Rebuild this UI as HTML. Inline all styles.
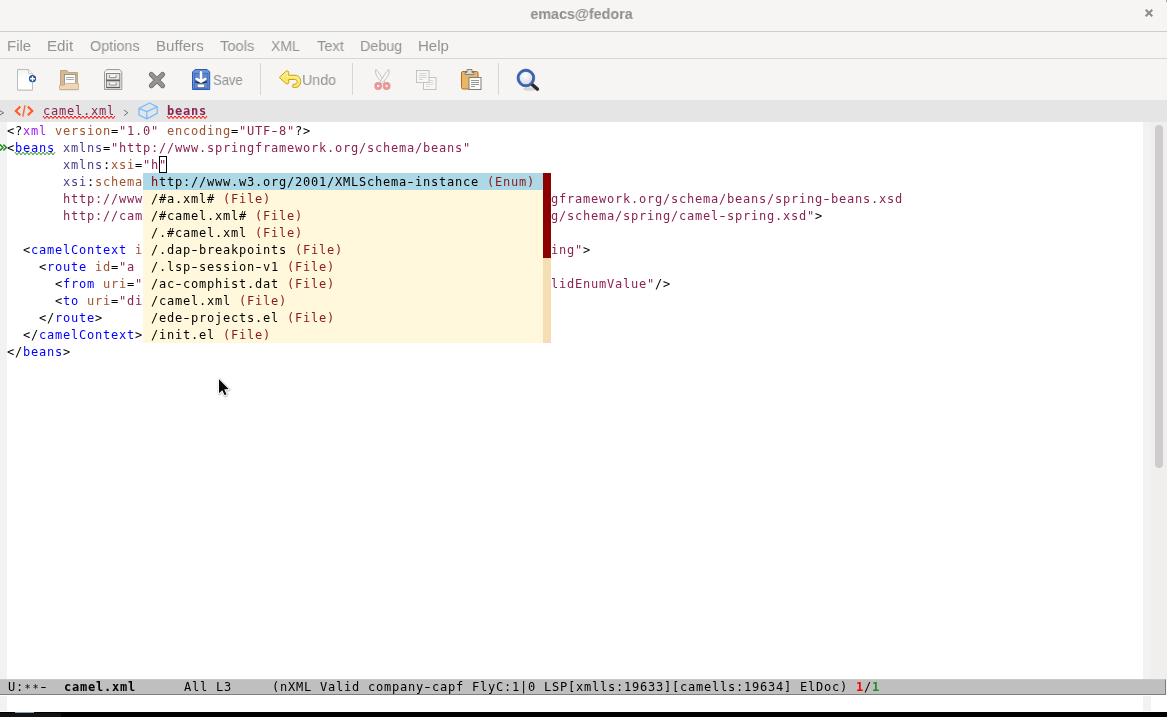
<!DOCTYPE html>
<html lang="en">
<head>
<meta charset="utf-8">
<title>emacs@fedora</title>
<style>
html,body{margin:0;padding:0;}
body{width:1167px;height:717px;overflow:hidden;background:#f6f5f4;position:relative;font-family:"Liberation Sans","DejaVu Sans",sans-serif;}
.abs{position:absolute;}
.t{will-change:transform;}
.h{display:inline-block;transform:scaleX(1.450);}
.as{display:inline-block;transform:translateY(2px) scale(0.850);}
#titlebar{left:0;top:0;width:1167px;height:31px;background:#f6f5f4;}
#title{left:-1.700px;width:1167px;top:5px;transform:scaleX(0.955);text-align:center;font-weight:bold;font-size:15px;color:#8e8e8c;line-height:18px;}
.hline{left:0;width:1167px;height:1px;background:#d9d6d2;}
#menubar{left:0;top:32px;width:1167px;height:26px;}
.mi{position:absolute;top:5px;font-size:15px;line-height:18px;color:#909394;white-space:pre;transform-origin:0 0;display:inline-block;}
#toolbar{left:0;top:59px;width:1167px;height:41px;}
.tbtext{position:absolute;transform-origin:0 0;display:inline-block;font-size:15px;line-height:18px;color:#909394;top:12px;}
.vsep{position:absolute;top:4px;width:1px;height:32px;background:#d9d6d2;}
#header{left:0;top:100px;width:1167px;height:22px;background:#e5e5e5;}
.mono{font-family:"DejaVu Sans Mono","Liberation Mono",monospace;font-size:12px;line-height:17px;white-space:pre;letter-spacing:0.7754px;}
#buffer{left:0;top:122px;width:1167px;height:557px;background:#fff;}
#lfringe{left:0;top:122px;width:7px;height:557px;background:#f2f2f2;}
#rfringe{left:1143px;top:122px;width:8px;height:557px;background:#f2f2f2;}
#sbar{left:1151px;top:122px;width:16px;height:557px;background:#f1efee;}
#sthumb{left:1155px;top:125px;width:8px;height:343px;border-radius:4px;background:#cdcdcd;}
#code{left:7.4px;top:123px;color:#000;will-change:transform;}
.k{color:#a020f0}.v{color:#a0522d}.s{color:#8b2252}.f{color:#0000ff}.b{color:#483d8b}
#popup{left:143px;top:173px;width:400px;height:170px;background:#fff8dc;color:#000;}
#psel{left:143px;top:173px;width:400px;height:17px;background:#add8e6;}
#ptext{left:143.400px;top:174px;color:#000;}
.an{color:#8b1a1a}.cm{color:#8b0000}
#ptrack{left:543px;top:173px;width:8px;height:170px;background:#f5deb3;}
#pthumb{left:543px;top:173px;width:8px;height:85px;background:#8b0000;}
#cursor{left:159px;top:156px;width:6px;height:15px;border:1px solid #000;}
#modeline{left:0;top:679px;width:1166px;height:16px;background:#bfbfbf;box-sizing:border-box;border-top:1px solid #c8c8c8;border-bottom:1px solid #7f7f7f;border-right:1px solid #7f7f7f;color:#000;}
#mltext{left:8px;top:679px;color:#000;}
#echo{left:0;top:695px;width:1167px;height:17px;background:#fff;}
#bottom{left:0;top:712px;width:1167px;height:5px;background:#000;}
</style>
</head>
<body>
<div id="titlebar" class="abs"></div>
<div id="title" class="abs t">emacs@fedora</div>
<svg class="abs" style="left:1143px;top:7px" width="12" height="12" viewBox="1143 7 12 12"><path d="M1145.700 9.700 L1152.300 16.300 M1152.300 9.700 L1145.700 16.300" stroke="#8b8b89" stroke-width="2" fill="none"/></svg>
<div class="abs" style="left:1166px;top:0;width:1px;height:2px;background:#a4a4a3"></div>
<div class="abs hline" style="top:31px;background:#d0ccc8"></div>
<div id="menubar" class="abs">
<span class="mi t" style="left:7px;transform:scaleX(0.98)">File</span>
<span class="mi t" style="left:46.7px;transform:scaleX(1.01)">Edit</span>
<span class="mi t" style="left:89.5px;transform:scaleX(0.96)">Options</span>
<span class="mi t" style="left:155.7px;transform:scaleX(1.01)">Buffers</span>
<span class="mi t" style="left:220.3px;transform:scaleX(0.98)">Tools</span>
<span class="mi t" style="left:271px;transform:scaleX(0.935)">XML</span>
<span class="mi t" style="left:316.5px;transform:scaleX(0.98)">Text</span>
<span class="mi t" style="left:359.6px;transform:scaleX(0.956)">Debug</span>
<span class="mi t" style="left:417.9px;transform:scaleX(1.0)">Help</span>
</div>
<div class="abs hline" style="top:58px"></div>
<div id="toolbar" class="abs">
<span class="tbtext t" style="left:213.3px;transform:scaleX(0.87)">Save</span>
<span class="tbtext t" style="left:301.7px;transform:scaleX(0.95)">Undo</span>
<div class="vsep" style="left:260px"></div>
<div class="vsep" style="left:352px"></div>
<div class="vsep" style="left:498px"></div>
</div>
<svg class="abs" style="left:0;top:59px" width="1167" height="41" viewBox="0 59 1167 41">
<defs>
<linearGradient id="gpaper" x1="0" y1="0" x2="0" y2="1"><stop offset="0" stop-color="#f1f1f1"/><stop offset="0.450" stop-color="#ffffff"/><stop offset="1" stop-color="#ffffff"/></linearGradient>
<linearGradient id="gcab" x1="0" y1="0" x2="0" y2="1"><stop offset="0" stop-color="#e8e8e8"/><stop offset="1" stop-color="#b8b8b8"/></linearGradient>
<radialGradient id="gglass" cx="0.45" cy="0.35" r="0.7"><stop offset="0" stop-color="#ffffff"/><stop offset="1" stop-color="#d0d2d4"/></radialGradient>
</defs>
<!-- new file -->
<g>
<path d="M17.500 90.300 H32.500" stroke="#000" stroke-opacity="0.100" stroke-width="1.200"/>
<path d="M17.500 69.500 H28.500 L32.500 73.500 V90 H17.500 Z" fill="url(#gpaper)" stroke="#bcbcba" stroke-width="1"/>
<path d="M28.500 69.500 V73.500 H32.500" fill="#f4f4f4" stroke="#c4c4c2" stroke-width="0.800"/>
<circle cx="32.500" cy="78.650" r="3.550" fill="#1f4fa3"/>
<path d="M30 78.650 H35 M32.500 76.150 V81.150" stroke="#fff" stroke-width="1.450"/>
</g>
<!-- open folder -->
<g>
<path d="M60.500 70.500 H67 L68.500 72.500 H77.500 V88 H60.500 Z" fill="#d3b892" stroke="#c3a47c" stroke-width="1"/>
<rect x="64.500" y="74.500" width="11.200" height="11" fill="#fcfcfc" stroke="#8a8a88" stroke-width="0.800"/>
<path d="M66.200 77.500 H74 M66.200 79.500 H74" stroke="#a2a2a0" stroke-width="0.900"/>
<path d="M59.500 85.300 H64.300 L66 83.500 H78.500 V89.500 H59.500 Z" fill="#ecd8b9" stroke="#d3b48d" stroke-width="1"/>
<path d="M59.500 90.300 H78.500" stroke="#000" stroke-opacity="0.080" stroke-width="1"/>
</g>
<!-- dired cabinet -->
<g>
<path d="M104.500 89.500 V72 L106.800 69.500 H119.500 L121.800 72 V89.500 Z" fill="#ededed" stroke="#9c9c9a" stroke-width="1"/>
<path d="M105.500 72.300 H120.800" stroke="#fbfbfb" stroke-width="1.200"/>
<rect x="106.500" y="73.500" width="13.300" height="6.500" fill="#e6e6e6" stroke="#7b7b79" stroke-width="0.900"/>
<rect x="106.500" y="80.900" width="13.300" height="6.500" fill="#dedede" stroke="#7b7b79" stroke-width="0.900"/>
<path d="M106.300 80.300 H120 M106.300 87.700 H120" stroke="#4e4e4c" stroke-width="0.900"/>
<path d="M109.500 75.300 V77.600 H116 V75.300" fill="#fafafa" stroke="#848482" stroke-width="0.900"/>
<path d="M109.500 82.700 V85 H116 V82.700" fill="#fafafa" stroke="#848482" stroke-width="0.900"/>
</g>
<!-- close X -->
<g>
<path d="M151.300 74.400 L162.600 85.700 M162.600 74.400 L151.300 85.700" stroke="#6a6a68" stroke-width="5" stroke-linecap="round"/>
<path d="M151.300 74.400 L162.600 85.700 M162.600 74.400 L151.300 85.700" stroke="#949492" stroke-width="3.400" stroke-linecap="round"/>
</g>
<!-- save -->
<g>
<path d="M192.500 89.500 V72 L195 69.500 H207.200 L209.700 72 V89.500 Z" fill="#6a95dc" stroke="#2d5cab" stroke-width="1"/>
<rect x="194.300" y="73.300" width="13.600" height="7.600" fill="#5a88d4" stroke="#3a69ba" stroke-width="0.800"/>
<rect x="194.300" y="82.300" width="13.600" height="6" fill="#5f8cd6" stroke="#3a69ba" stroke-width="0.800"/>
<path d="M195.200 81.600 Q201 84.300 206.900 81.600" stroke="#1e1e1e" stroke-width="1.300" fill="none" opacity="0.850"/>
<path d="M197.600 84.600 V87.300 H204.300 V84.600" fill="#ffffff" stroke="#2a2a2a" stroke-width="0.700"/>
<path d="M197.900 84.800 V86.900 H204 V84.800" fill="#ffffff" stroke="#ffffff" stroke-width="0.600"/>
<path d="M201 72.300 V80.500 M196.600 78.900 L201 81.700 L205.400 78.900" fill="none" stroke="#30425e" stroke-width="3.600" stroke-linecap="round" stroke-linejoin="round" opacity="0.450"/>
<path d="M201 72.300 V80.500 M196.600 78.900 L201 81.700 L205.400 78.900" fill="none" stroke="#ffffff" stroke-width="2.700" stroke-linecap="round" stroke-linejoin="round"/>
</g>
<!-- undo -->
<g>
<path d="M279.300 77.400 L285.800 71.400 Q288.700 69.800 288.700 72.600 V75.300 H295 C299.300 75.300 300.700 78.500 300.700 81.500 C300.700 85.400 298 87.600 294.600 87.600 L292.600 87.200 L293.100 84.300 C295.800 84.600 297.200 83.300 297.200 81.800 C297.200 80.400 296.200 79.500 294.800 79.500 H288.700 V82.200 Q288.700 85 285.800 83.400 Z" fill="#f9e76c" stroke="#c8a408" stroke-width="1" stroke-linejoin="round"/>
<path d="M281.500 77.400 L287 72.600 V76.900 H295 C298 76.900 299 79.300 299 81.300" fill="none" stroke="#fdf6b8" stroke-width="0.900" stroke-linejoin="round" opacity="0.900"/>
</g>
<!-- cut -->
<g opacity="0.75">
<path d="M376 69.5 C374.5 73 376.5 77 383.6 84 L384.8 82.5 C381.5 77 378.5 72 376 69.5 Z" fill="#fafafa" stroke="#9c9c9a" stroke-width="0.8"/>
<path d="M388.6 69.5 C390.1 73 388.1 77 381 84 L379.8 82.5 C383.1 77 386.1 72 388.600 69.5 Z" fill="#fafafa" stroke="#9c9c9a" stroke-width="0.8"/>
<circle cx="378.200" cy="86" r="2.550" fill="none" stroke="#e37878" stroke-width="2.700"/>
<circle cx="386.600" cy="86" r="2.550" fill="none" stroke="#e37878" stroke-width="2.700"/>
</g>
<!-- copy -->
<g opacity="0.650">
<rect x="423.500" y="77.500" width="12.500" height="12" fill="#f8f8f8" stroke="#a8a8a6" stroke-width="1"/>
<path d="M426 80.500 H433.500 M426 82.500 H433.500 M426 84.500 H433.500 M426 86.500 H430" stroke="#c2c2c0" stroke-width="0.8"/>
<rect x="416.500" y="70.500" width="12.500" height="12" fill="#f8f8f8" stroke="#a8a8a6" stroke-width="1"/>
<path d="M419 73.500 H426.500 M419 75.500 H426.500 M419 77.500 H426.500 M419 79.500 H423" stroke="#b4b4b2" stroke-width="0.8"/>
</g>
<!-- paste -->
<g>
<rect x="461.500" y="71.500" width="16.500" height="17.500" rx="1.500" fill="#e9b566" stroke="#b9691f" stroke-width="1"/>
<path d="M465 74.500 V72.500 H467 V69.500 H472 V72.500 H474 V74.500 Z" fill="#d8d8d6" stroke="#7c7c7a" stroke-width="0.9"/>
<rect x="469" y="77.500" width="12" height="12" fill="#fbfbfb" stroke="#7e7e7c" stroke-width="1"/>
<path d="M471 80.500 H479 M471 82.500 H479 M471 84.500 H479 M471 86.500 H475" stroke="#8c8c8a" stroke-width="0.9"/>
</g>
<!-- search -->
<g>
<ellipse cx="530" cy="89" rx="7" ry="1.800" fill="#000" opacity="0.13"/>
<path d="M531.500 84 L537.300 89" stroke="#2a2a2a" stroke-width="3.600" stroke-linecap="round"/>
<circle cx="525.900" cy="78" r="7.600" fill="url(#gglass)" stroke="#3b63b8" stroke-width="2.600"/>
<circle cx="525.900" cy="78" r="8.900" fill="none" stroke="#2b4c98" stroke-width="0.600"/>
</g>
</svg>
<div id="header" class="abs"></div>
<svg class="abs" style="left:0;top:100px" width="260" height="22" viewBox="0 100 260 22">
<path d="M-1 110.2 L3.6 112.8 L-1 115.500" fill="none" stroke="#6e6e6e" stroke-width="1"/>
<path d="M20.300 106.600 L15.800 110.900 L20.300 115.300" fill="none" stroke="#ff5a2a" stroke-width="2.100"/>
<path d="M25 105.300 L22.800 116.700" fill="none" stroke="#ff6a3c" stroke-width="1.500"/>
<path d="M27.800 106.600 L32.300 110.900 L27.800 115.300" fill="none" stroke="#ff5a2a" stroke-width="2.100"/>
<path d="M124.200 110.200 L127.800 112.800 L124.200 115.500" fill="none" stroke="#6e6e6e" stroke-width="1"/>
<path d="M149.600 103 L157.200 106.900 V113.400 L146.800 118.800 L139 115 V108.400 Z M139 108.400 L146.800 111.600 L157.200 106.900 M146.800 111.600 V118.800" fill="none" stroke="#75beff" stroke-width="1.300" stroke-linejoin="round"/>
<polyline points="43,116 45,118.6 47,116 49,118.6 51,116 53,118.6 55,116 57,118.6 59,116 61,118.6 63,116 65,118.6 67,116 69,118.6 71,116 73,118.6 75,116 77,118.6 79,116 81,118.6 83,116 85,118.6 87,116 89,118.6 91,116 93,118.6 95,116 97,118.6 99,116 101,118.6 103,116 105,118.6 107,116 109,118.6 111,116 113,118.6 115,116" fill="none" stroke="#ff0000" stroke-width="1.0"/>
<polyline points="167,116 169,118.6 171,116 173,118.6 175,116 177,118.6 179,116 181,118.6 183,116 185,118.6 187,116 189,118.6 191,116 193,118.6 195,116 197,118.6 199,116 201,118.6 203,116 205,118.6 207,116" fill="none" stroke="#ff0000" stroke-width="1.0"/>
</svg>
<span class="abs mono t" style="left:43.400px;top:103px;color:#8b2252">camel.xml</span>
<span class="abs mono t" style="left:167.400px;top:103px;color:#8b2252;font-weight:bold">beans</span>
<div id="buffer" class="abs"></div>
<div id="lfringe" class="abs"></div>
<div id="rfringe" class="abs"></div>
<div id="sbar" class="abs"></div>
<div id="sthumb" class="abs"></div>
<svg class="abs" style="left:0;top:122px" width="600" height="60" viewBox="0 122 600 60">
<path d="M0 144.600 L3 147.500 L0 150.400 M3.400 144.600 L6.400 147.500 L3.400 150.400" fill="none" stroke="#228b22" stroke-width="1.500"/>
<polyline points="15,152.2 17,154.8 19,152.2 21,154.8 23,152.2 25,154.8 27,152.2 29,154.8 31,152.2 33,154.8 35,152.2 37,154.8 39,152.2 41,154.8 43,152.2 45,154.8 47,152.2 49,154.8 51,152.2 53,154.8 55,152.2" fill="none" stroke="#228b22" stroke-width="1.0"/>
</svg>
<div id="code" class="abs mono">&lt;?<span class="k">xml</span> <span class="v">version</span>=<span class="s">"1.0"</span> <span class="v">encoding</span>=<span class="s">"UTF<span class="h">-</span>8"</span>?&gt;
&lt;<span class="f">beans</span> <span class="b">xmlns</span>=<span class="s">"http://www.springframework.org/schema/beans"</span>
       <span class="b">xmlns</span>:<span class="v">xsi</span>=<span class="s">"h"</span>
       <span class="b">xsi</span>:<span class="v">schemaLocation</span>=<span class="s">"</span>
<span class="s">       http://www.springframework.org/schema/beans  http://www.springframework.org/schema/beans/spring<span class="h">-</span>beans.xsd</span>
<span class="s">       http://camel.apache.org/schema/spring  http://camel.apache.org/schema/spring/camel<span class="h">-</span>spring.xsd"</span>&gt;

  &lt;<span class="f">camelContext</span> <span class="v">id</span>=<span class="s">"camel"</span> <span class="b">xmlns</span>=<span class="s">"http://camel.apache.org/schema/spring"</span>&gt;
    &lt;<span class="f">route</span> <span class="v">id</span>=<span class="s">"a route"</span>&gt;
      &lt;<span class="f">from</span> <span class="v">uri</span>=<span class="s">"timer:timerName?delay=1000&amp;amp;exchangePattern=InvalidEnumValue"</span>/&gt;
      &lt;<span class="f">to</span> <span class="v">uri</span>=<span class="s">"direct:drink"</span>/&gt;
    &lt;/<span class="f">route</span>&gt;
  &lt;/<span class="f">camelContext</span>&gt;
&lt;/<span class="f">beans</span>&gt;</div>
<div id="popup" class="abs"></div>
<div id="psel" class="abs"></div>
<div id="ptext" class="abs mono t"> <span class="cm">h</span>ttp://www.w3.org/2001/XMLSchema<span class="h">-</span>instance <span class="an">(Enum)</span>
 /#a.xml# <span class="an">(File)</span>
 /#camel.xml# <span class="an">(File)</span>
 /.#camel.xml <span class="an">(File)</span>
 /.dap<span class="h">-</span>breakpoints <span class="an">(File)</span>
 /.lsp<span class="h">-</span>session<span class="h">-</span>v1 <span class="an">(File)</span>
 /ac<span class="h">-</span>comphist.dat <span class="an">(File)</span>
 /camel.xml <span class="an">(File)</span>
 /ede<span class="h">-</span>projects.el <span class="an">(File)</span>
 /init.el <span class="an">(File)</span></div>
<div id="ptrack" class="abs"></div>
<div id="pthumb" class="abs"></div>
<div id="cursor" class="abs"></div>
<svg class="abs" style="left:212px;top:374px" width="24" height="28" viewBox="212 374 24 28">
<path d="M219 379.300 V393.200 L222.300 390.300 L224.700 395.200 L226.500 394.300 L224.200 389.500 L228.600 389.100 Z" fill="none" stroke="#000" stroke-opacity="0.180" stroke-width="3.400" stroke-linejoin="round" transform="translate(0.300 0.600)"/>
<path d="M219 379.300 V393.200 L222.300 390.300 L224.700 395.200 L226.500 394.300 L224.200 389.500 L228.600 389.100 Z" fill="#0a0a0a" stroke="#ffffff" stroke-width="1.800" stroke-linejoin="round" paint-order="stroke"/>
</svg>
<div id="modeline" class="abs"></div>
<div id="mltext" class="abs mono t">U:<span class="as">*</span><span class="as">*</span><span class="h">-</span>  <b>camel.xml</b>      All L3     (nXML Valid company<span class="h">-</span>capf FlyC:1|0 LSP[xmlls:19633][camells:19634] ElDoc) <b style="color:#ff0000">1</b>/<b style="color:#228b22">1</b></div>
<div id="echo" class="abs"></div>
<div class="abs" style="left:0;top:696px;width:7px;height:15px;background:#f2f2f2"></div>
<div class="abs" style="left:1143px;top:696px;width:8px;height:15px;background:#f2f2f2"></div>
<div id="bottom" class="abs"></div>
<div class="abs" style="left:0;top:713px;width:61px;height:4px;background:#121212"></div>
<div class="abs" style="left:15px;top:712px;width:19px;height:1px;background:#7fa6bd"></div>
</body>
</html>
